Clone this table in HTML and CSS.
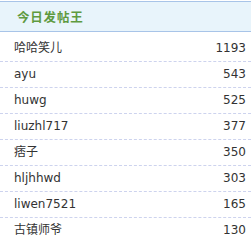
FILE: index.html
```html
<!DOCTYPE html>
<html lang="zh">
<head>
<meta charset="utf-8">
<title>今日发帖王</title>
<link rel="stylesheet" href="styles.css">
</head>
<body>
<div class="box">
  <div class="hd">今日发帖王</div>
  <ul class="list">
    <li><span class="name">哈哈笑儿</span><span class="num">1193</span></li>
    <li><span class="name">ayu</span><span class="num">543</span></li>
    <li><span class="name">huwg</span><span class="num">525</span></li>
    <li><span class="name">liuzhl717</span><span class="num">377</span></li>
    <li><span class="name">痞子</span><span class="num">350</span></li>
    <li><span class="name">hljhhwd</span><span class="num">303</span></li>
    <li><span class="name">liwen7521</span><span class="num">165</span></li>
    <li><span class="name">古镇师爷</span><span class="num">130</span></li>
  </ul>
</div>
</body>
</html>
```
FILE: styles.css
```css
html, body {
  margin: 0;
  padding: 0;
  background: #fff;
}
.box {
  padding-top: 1px;
  font-family: "DejaVu Sans", "Noto Sans CJK SC", sans-serif;
  font-size: 12px;
  color: #333;
}
.hd {
  height: 29px;
  line-height: 29px;
  padding-left: 17px;
  background: #e8f4fb;
  border-top: 1px solid #a8c4e8;
  border-bottom: 1px solid #a8c4e8;
  color: #5f9a3f;
  font-weight: bold;
  font-size: 12.5px;
  letter-spacing: 0.8px;
  font-family: "Noto Sans CJK SC", sans-serif;
}
.list {
  list-style: none;
  margin: 0;
  padding: 4px 0 0;
}
.list li {
  display: flex;
  justify-content: space-between;
  height: 25px;
  line-height: 25px;
  padding: 0 5px 0 14px;
  border-bottom: 1px dashed #cdd3ee;
}
.list li:last-child {
  border-bottom: none;
}
```
